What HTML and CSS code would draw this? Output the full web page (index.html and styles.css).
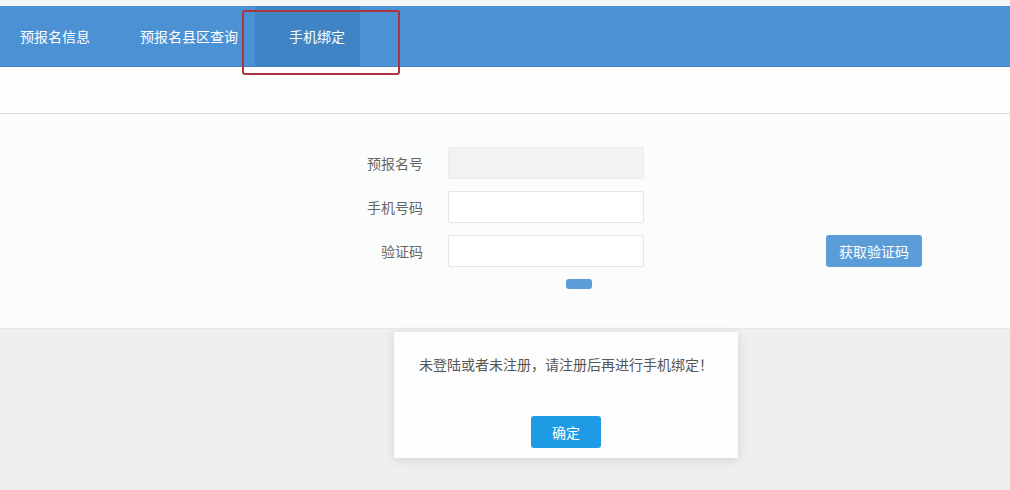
FILE: index.html
```html
<!DOCTYPE html>
<html lang="zh-CN">
<head>
<meta charset="utf-8">
<title>手机绑定</title>
<link rel="stylesheet" href="styles.css">
</head>
<body>
<div class="topstrip"></div>
<nav class="nav">
  <a class="tab">预报名信息</a>
  <a class="tab">预报名县区查询</a>
  <a class="tab tab-active">手机绑定</a>
</nav>
<div class="highlight"></div>
<div class="subbar"></div>
<main class="panel">
  <form class="form">
    <label class="label">预报名号</label>
    <input class="field field-disabled" type="text" disabled>
    <span></span>
    <label class="label">手机号码</label>
    <input class="field" type="text">
    <span></span>
    <label class="label">验证码</label>
    <input class="field" type="text">
    <button type="button" class="btn-code">获取验证码</button>
    <span></span>
    <button type="button" class="btn-small"></button>
  </form>
</main>
<section class="backdrop"></section>
<div class="dialog">
  <p class="dialog-msg">未登陆或者未注册，请注册后再进行手机绑定！</p>
  <button type="button" class="btn-ok">确定</button>
</div>
</body>
</html>
```
FILE: styles.css
```css
* { box-sizing: border-box; }
body {
  margin: 0;
  height: 100vh;
  background: #eef0f0;
  font-family: "Noto Sans CJK SC", "Noto Sans", sans-serif;
  font-size: 14px;
  position: relative;
  overflow: hidden;
  display: flex;
  flex-direction: column;
}
.topstrip { height: 6px; flex: none; background: #f3f5f6; }
.nav {
  flex: none;
  height: 61px;
  background: #4b91d3;
  border-bottom: 1px solid #3f7fbd;
  display: flex;
  align-items: stretch;
}
.tab {
  color: #fff;
  display: flex;
  align-items: center;
  padding: 0 25px;
  white-space: nowrap;
  line-height: 1;
}
.tab:first-child { padding-left: 20px; padding-right: 50px; }
.tab:nth-child(2) { padding-left: 0; padding-right: 17px; }
.tab-active {
  background: #3f84c4;
  padding: 0 15px 0 34px;
}
.highlight {
  position: absolute;
  left: 242px;
  top: 10px;
  width: 158px;
  height: 65px;
  border: 2px solid #a9363f;
  border-radius: 3px;
}
.subbar {
  flex: none;
  height: 47px;
  background: #fefefd;
  border-bottom: 1px solid #dcdcdc;
}
.panel {
  flex: none;
  height: 215px;
  background: #fbfcfc;
  border-bottom: 1px solid #e6e8e8;
  padding-top: 33px;
}
.form {
  display: grid;
  grid-template-columns: 75px 196px 96px;
  column-gap: 25px;
  row-gap: 12px;
  margin-left: 348px;
  align-items: center;
}
.form .btn-code { margin-left: 157px; }
.label {
  text-align: right;
  color: #666;
  font-size: 14px;
}
.field {
  height: 32px;
  width: 196px;
  border: 1px solid #e4e5e5;
  background: #fff;
  border-radius: 2px;
  font: inherit;
}
.field-disabled { background: #f1f2f2; border-color: #ececec; }
.btn-code {
  width: 96px;
  height: 32px;
  background: #5b9dd9;
  color: #fff;
  border: 0;
  border-radius: 3px;
  font: inherit;
  font-size: 14px;
  padding: 0;
}
.btn-small {
  grid-column: 2;
  width: 26px;
  height: 10px;
  margin-left: 118px;
  background: #5b9dd9;
  border: 0;
  border-radius: 3px;
  padding: 0;
}
.backdrop { flex: 1; }
.dialog {
  position: absolute;
  left: 394px;
  top: 332px;
  width: 344px;
  height: 126px;
  background: #fdfdfd;
  box-shadow: 0 2px 10px rgba(0,0,0,0.12);
  padding: 22px 25px 10px;
  display: flex;
  flex-direction: column;
  align-items: center;
}
.dialog-msg {
  margin: 0;
  color: #555;
  font-size: 14px;
  line-height: 20px;
  align-self: flex-start;
  white-space: nowrap;
}
.btn-ok {
  margin-top: 42px;
  width: 70px;
  height: 32px;
  background: #1f9be6;
  color: #fff;
  border: 0;
  border-radius: 3px;
  font: inherit;
  font-size: 14px;
  padding: 0;
}
```
